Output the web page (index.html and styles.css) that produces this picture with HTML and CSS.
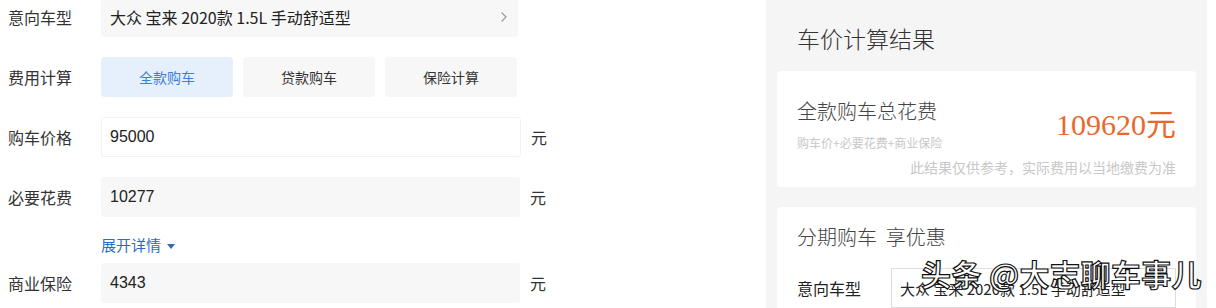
FILE: index.html
```html
<!DOCTYPE html>
<html lang="zh-CN">
<head>
<meta charset="utf-8">
<link rel="stylesheet" href="styles.css">
</head>
<body>
<div class="page">
  <div class="form">
    <div class="row first">
      <div class="label">意向车型</div>
      <div class="field grey select">
        <span>大众 宝来 2020款 1.5L 手动舒适型</span>
        <svg class="chev" width="8" height="12" viewBox="0 0 8 12"><path d="M1.5 1.5 L6 6 L1.5 10.5" fill="none" stroke="#999" stroke-width="1.2"/></svg>
      </div>
    </div>
    <div class="row">
      <div class="label">费用计算</div>
      <div class="tabs">
        <div class="tab active">全款购车</div>
        <div class="tab">贷款购车</div>
        <div class="tab">保险计算</div>
      </div>
    </div>
    <div class="row">
      <div class="label">购车价格</div>
      <div class="field white">95000</div>
      <div class="unit">元</div>
    </div>
    <div class="row">
      <div class="label">必要花费</div>
      <div class="field grey">10277</div>
      <div class="unit">元</div>
    </div>
    <div class="more">展开详情 <span class="tri"></span></div>
    <div class="row ins">
      <div class="label">商业保险</div>
      <div class="field grey">4343</div>
      <div class="unit">元</div>
    </div>
  </div>
  <div class="side">
    <div class="side-title">车价计算结果</div>
    <div class="card total">
      <div class="total-top">
        <div>
          <div class="card-title">全款购车总花费</div>
          <div class="formula">购车价+必要花费+商业保险</div>
        </div>
        <div class="amount">109620元</div>
      </div>
      <div class="note">此结果仅供参考，实际费用以当地缴费为准</div>
    </div>
    <div class="card loan">
      <div class="card-title">分期购车&nbsp; 享优惠</div>
      <div class="loan-row">
        <div class="loan-label">意向车型</div>
        <div class="loan-field">大众 宝来 2020款 1.5L 手动舒适型</div>
      </div>
      <div class="watermark">头条 @大志聊车事儿</div>
    </div>
  </div>
</div>
</body>
</html>
```
FILE: styles.css
```css
* { box-sizing: border-box; }
html, body { margin: 0; padding: 0; background: #fff; }
body {
  width: 1216px; height: 308px; overflow: hidden;
  font-family: "Noto Sans CJK SC", "Noto Sans", sans-serif;
  color: #222;
}
.page { display: flex; align-items: flex-start; height: 308px; overflow: hidden; }
.form { width: 766px; padding-left: 8px; }
.row { display: flex; align-items: center; height: 40px; margin-top: 20px; }
.row.first { margin-top: -3px; }
.row.ins { margin-top: 8px; }
.label { width: 93px; font-size: 16px; color: #333; }
.field {
  width: 419px; height: 40px; display: flex; align-items: center;
  padding-left: 9px; font-family: "Liberation Sans", "Noto Sans CJK SC", sans-serif;
  font-size: 16px; color: #222; border-radius: 3px;
}
.field.grey { background: #f7f7f7; }
.field.white { background: #fff; border: 1px solid #f2f2f2; width: 420px; padding-left: 8px; }
.select { width: 417px; justify-content: space-between; padding-right: 10px; font-family: "Noto Sans CJK SC", sans-serif; font-size: 16px; color: #222; }
.unit { margin-left: 10px; font-size: 16px; color: #333; }
.tabs { display: flex; gap: 10px; }
.tab {
  width: 132px; height: 40px; display: flex; align-items: center; justify-content: center;
  background: #f7f7f7; border-radius: 4px; font-size: 14px; color: #333;
}
.tab.active { background: #e6effc; color: #3d7fd9; }
.more { margin: 18px 0 0 93px; height: 20px; line-height: 20px; font-size: 15px; color: #2c6bc2; display: flex; align-items: center; gap: 6px; }
.tri { width: 0; height: 0; border-left: 4px solid transparent; border-right: 4px solid transparent; border-top: 5px solid #2c6bc2; margin-top: 2px; }

.side { width: 441px; height: 308px; background: #f5f5f5; padding: 0 11px; overflow: hidden; }
.side-title { height: 71px; padding: 22px 0 0 20px; font-size: 23px; font-weight: 300; color: #333; line-height: 32px; }
.card { background: #fff; border-radius: 4px; padding: 0 20px; }
.total { height: 116px; padding-top: 25px; }
.total-top { display: flex; justify-content: space-between; align-items: flex-start; }
.card-title { font-size: 20px; font-weight: 300; color: #444; line-height: 30px; }
.formula { margin-top: 9px; font-size: 12px; color: #c8c8c8; line-height: 16px; }
.amount { margin-top: 13px; font-family: "Liberation Serif", "Noto Sans CJK SC", serif; font-size: 30px; color: #e8692d; line-height: 32px; }
.note { margin-top: 7px; text-align: right; font-size: 14px; color: #c8c8c8; line-height: 18px; }
.loan { margin-top: 20px; height: 120px; padding-top: 15px; position: relative; }
.loan-row { display: flex; align-items: center; margin-top: 16px; }
.loan-label { width: 94px; font-size: 16px; color: #222; }
.loan-field { width: 285px; height: 40px; border: 1px solid #ddd; padding-left: 8px; display: flex; align-items: center; font-size: 15px; color: #222; white-space: nowrap; overflow: hidden; }
.watermark {
  position: absolute; left: 144px; top: 48px;
  font-size: 30px; font-weight: 700; color: #fff; white-space: nowrap; line-height: 36px;
  -webkit-text-stroke: 1.2px #111; letter-spacing: 0.4px;
}
```
